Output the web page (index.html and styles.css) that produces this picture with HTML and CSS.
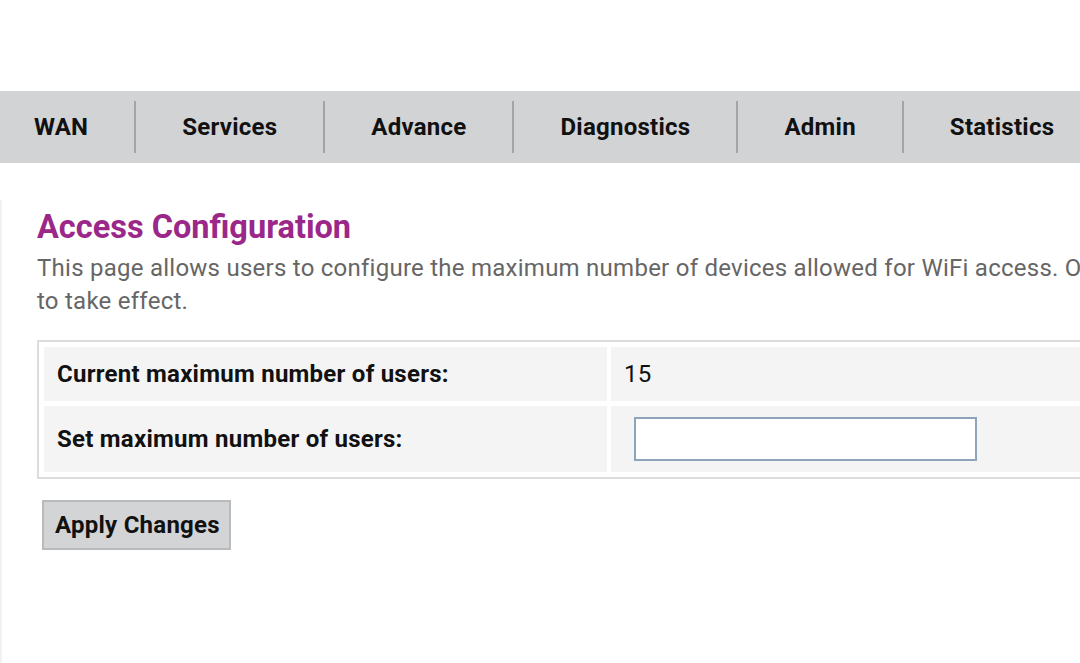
FILE: index.html
```html
<!DOCTYPE html>
<html lang="en">
<head>
<meta charset="utf-8">
<title>Access Configuration</title>
<meta name="viewport" content="width=device-width,initial-scale=1.0">
<link rel="stylesheet" href="styles.css">
</head>
<body>

<!-- ===== top menu ===== -->
<div class="topgap"></div>
<nav class="tabs">
  <a class="tab first">WAN</a>
  <a class="tab">Services</a>
  <a class="tab">Advance</a>
  <a class="tab">Diagnostics</a>
  <a class="tab">Admin</a>
  <a class="tab">Statistics</a>
</nav>

<!-- ===== page body ===== -->
<main class="page">
  <h1 class="title">Access Configuration</h1>
  <p class="intro">This page allows users to configure the maximum number of devices allowed for WiFi access. Only after the device restarts will the new limit begin<br>to take effect.</p>

  <form class="cfg">
    <div class="grid">
      <div class="cell label">Current maximum number of users:</div>
      <div class="cell value">15</div>
      <div class="cell label tall">Set maximum number of users:</div>
      <div class="cell value tall"><input type="text" class="num"></div>
    </div>
    <button type="button" class="btn">Apply Changes</button>
  </form>
</main>

</body>
</html>
```

FILE: styles.css
```css
/* ==== reset ==== */
*,*::before,*::after{box-sizing:border-box}
html,body{margin:0;padding:0;background:#fff;overflow:hidden;font-family:Roboto,"Noto Sans",sans-serif;letter-spacing:.25px}

/* ==== top menu ==== */
.topgap{height:91px}
.tabs{
  display:flex;align-items:center;
  height:72px;width:1300px;
  background:#d2d3d5;
}
.tab{
  font-size:24px;font-weight:700;color:#111;
  line-height:51px;padding:1px 46px 0;
  border-left:2px solid #a3a4a6;
}
.tab.first{border-left:none;padding-left:34px}

/* ==== page body ==== */
.page{
  margin-top:37px;padding:9px 0 120px 35px;
  width:1500px;
  border-left:2px solid #f1f1f1;
}
.title{margin:0;font-size:32.5px;line-height:36px;font-weight:700;color:#9b2789;letter-spacing:0}
.intro{margin:7px 0 0;font-size:24px;line-height:33px;color:#666;white-space:nowrap}

/* ==== table ==== */
.cfg{margin-top:22px}
.grid{
  display:grid;grid-template-columns:563px 1fr;
  gap:5px 4px;
  width:1200px;padding:5px;
  border:2px solid #dcdcdc;
}
.cell{
  display:flex;align-items:center;
  height:54px;padding:0 13px;
  background:#f4f4f4;font-size:24px;color:#111;
}
.cell.tall{height:66px}
.label{font-weight:700}
.value.tall{padding-left:23px}
.num{
  width:343px;height:44px;
  border:2px solid #8fa4b8;background:#fff;
}

.btn{
  margin:21px 0 0 5px;
  width:189px;height:50px;padding:0 0 0 11px;
  text-align:left;
  font-family:Roboto,sans-serif;font-size:24px;font-weight:700;color:#111;letter-spacing:.25px;
  background:#d3d4d6;border:2px solid #b9babb;border-radius:0;
}
```
